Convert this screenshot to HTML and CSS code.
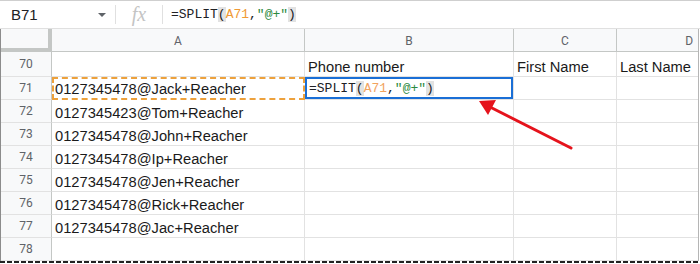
FILE: index.html
```html
<!DOCTYPE html>
<html lang="en">
<head>
    <meta charset="UTF-8">
    <title>SPLIT formula</title>
    <link rel="stylesheet" href="styles.css">
</head>
<body>
    <div class="page">
        <!-- Formula bar -->
        <div class="formula-bar">
            <div class="name-box">
                <span class="cell-ref">B71</span>
                <span class="caret"></span>
            </div>
            <div class="fx">fx</div>
            <div class="formula">=SPLIT<span class="paren">(</span><span class="ref">A71</span>,<span class="str">"@+"</span><span class="paren">)</span></div>
        </div>

        <!-- Sheet grid -->
        <div class="sheet">
            <div class="corner"></div>
            <div class="col-head">A</div>
            <div class="col-head">B</div>
            <div class="col-head">C</div>
            <div class="col-head col-d">D</div>

            <div class="row-num tall">70</div>
            <div class="cell tall"></div>
            <div class="cell tall">Phone number</div>
            <div class="cell tall">First Name</div>
            <div class="cell tall">Last Name</div>

            <div class="row-num">71</div>
            <div class="cell copied">0127345478@Jack+Reacher</div>
            <div class="cell active"><span class="edit">=SPLIT<span class="paren">(</span><span class="ref light">A71</span>,<span class="str">"@+"</span><span class="paren">)</span></span></div>
            <div class="cell"></div>
            <div class="cell"></div>

            <div class="row-num">72</div>
            <div class="cell">0127345423@Tom+Reacher</div>
            <div class="cell"></div>
            <div class="cell"></div>
            <div class="cell"></div>

            <div class="row-num">73</div>
            <div class="cell">0127345478@John+Reacher</div>
            <div class="cell"></div>
            <div class="cell"></div>
            <div class="cell"></div>

            <div class="row-num">74</div>
            <div class="cell">0127345478@Ip+Reacher</div>
            <div class="cell"></div>
            <div class="cell"></div>
            <div class="cell"></div>

            <div class="row-num">75</div>
            <div class="cell">0127345478@Jen+Reacher</div>
            <div class="cell"></div>
            <div class="cell"></div>
            <div class="cell"></div>

            <div class="row-num">76</div>
            <div class="cell">0127345478@Rick+Reacher</div>
            <div class="cell"></div>
            <div class="cell"></div>
            <div class="cell"></div>

            <div class="row-num">77</div>
            <div class="cell">0127345478@Jac+Reacher</div>
            <div class="cell"></div>
            <div class="cell"></div>
            <div class="cell"></div>

            <div class="row-num">78</div>
            <div class="cell"></div>
            <div class="cell"></div>
            <div class="cell"></div>
            <div class="cell"></div>
        </div>
        <div class="torn-edge"></div>

        <!-- Red annotation arrow -->
        <svg class="arrow" width="700" height="264" viewBox="0 0 700 264">
            <line x1="571" y1="148" x2="490" y2="107" stroke="#e5131c" stroke-width="3" stroke-linecap="round"/>
            <polygon points="479,101 496,100 488,115" fill="#e5131c"/>
        </svg>
    </div>
</body>
</html>
```

FILE: styles.css
```css
/* Page reset */
body {
    margin: 0;
    font-family: "Liberation Sans", Arial, sans-serif;
    background: #fff;
}

.page {
    position: relative;
    width: 700px;
    height: 264px;
    overflow: hidden;
}

/* Formula bar across the top */
.formula-bar {
    display: flex;
    align-items: center;
    height: 27px;
    border-top: 1px solid #cfcfcf;
    border-bottom: 1px solid #e0e0e0;
}

.name-box {
    display: flex;
    align-items: center;
    justify-content: space-between;
    width: 116px;
    height: 19px;
    padding-left: 11px;
    padding-right: 9px;
    border-right: 1px solid #e0e0e0;
    box-sizing: border-box;
}

.cell-ref {
    font-size: 15px;
    color: #202124;
}

.caret {
    width: 0;
    height: 0;
    border-left: 4px solid transparent;
    border-right: 4px solid transparent;
    border-top: 4px solid #5f6368;
}

.fx {
    width: 47px;
    height: 19px;
    line-height: 19px;
    text-align: center;
    font-family: "Liberation Serif", "Times New Roman", serif;
    font-style: italic;
    font-size: 20px;
    color: #c4c4c4;
    border-right: 1px solid #e0e0e0;
    box-sizing: border-box;
}

.formula {
    padding-left: 8px;
    font-family: "Liberation Mono", "Courier New", monospace;
    font-size: 13px;
    color: #202124;
}

.paren {
    background: #e2e2e2;
}

.ref {
    color: #f09a36;
}

.ref.light {
    color: #f2a35f;
}

.str {
    color: #2b8a3e;
}

/* Spreadsheet grid */
.sheet {
    display: grid;
    grid-template-columns: 51px 253px 209px 103px 1fr;
    grid-template-rows: 23px 25px repeat(8, 23px);
    width: 699px;
    border-left: 1px solid #8c8c8c;
    border-right: 1px solid #b5b5b5;
    box-sizing: border-box;
}

.sheet > div {
    box-sizing: border-box;
    border-right: 1px solid #e2e2e2;
    border-bottom: 1px solid #e2e2e2;
}

.corner {
    background: #f8f9fa;
    border-right: 4px solid #c4c7c5 !important;
    border-bottom: 4px solid #c4c7c5 !important;
}

.col-head {
    display: flex;
    align-items: center;
    justify-content: center;
    padding-top: 2px;
    background: #f8f9fa;
    font-family: Roboto, "Liberation Sans", sans-serif;
    font-size: 12px;
    color: #5f6368;
    border-right-color: #c4c7c5 !important;
    border-bottom-color: #c4c7c5 !important;
}

.col-head.col-d {
    justify-content: flex-end;
    padding-right: 5px;
    border-right: none !important;
}

.row-num {
    display: flex;
    align-items: center;
    justify-content: center;
    background: #f8f9fa;
    font-family: Roboto, "Liberation Sans", sans-serif;
    font-size: 12px;
    color: #5f6368;
    border-right-color: #c4c7c5 !important;
}

.cell {
    display: flex;
    align-items: flex-end;
    padding-left: 3px;
    font-size: 14.7px;
    line-height: 17px;
    color: #1a1a1a;
    white-space: nowrap;
}

.cell:nth-child(5n) {
    border-right: none !important;
}

.copied {
    border: 2px dashed #eda13c !important;
    padding-left: 1px;
}

.active {
    box-shadow: inset 0 0 0 2px #1a6fd6;
    padding-left: 4px;
    align-items: center;
}

.edit {
    font-family: "Liberation Mono", "Courier New", monospace;
    font-size: 13px;
    color: #202124;
}

/* Dashed torn edge at the bottom */
.torn-edge {
    height: 2px;
    width: 699px;
    background: repeating-linear-gradient(90deg, #222 0 5px, #fff 5px 7px);
}

/* Annotation overlay */
.arrow {
    position: absolute;
    left: 0;
    top: 0;
    pointer-events: none;
}
```
